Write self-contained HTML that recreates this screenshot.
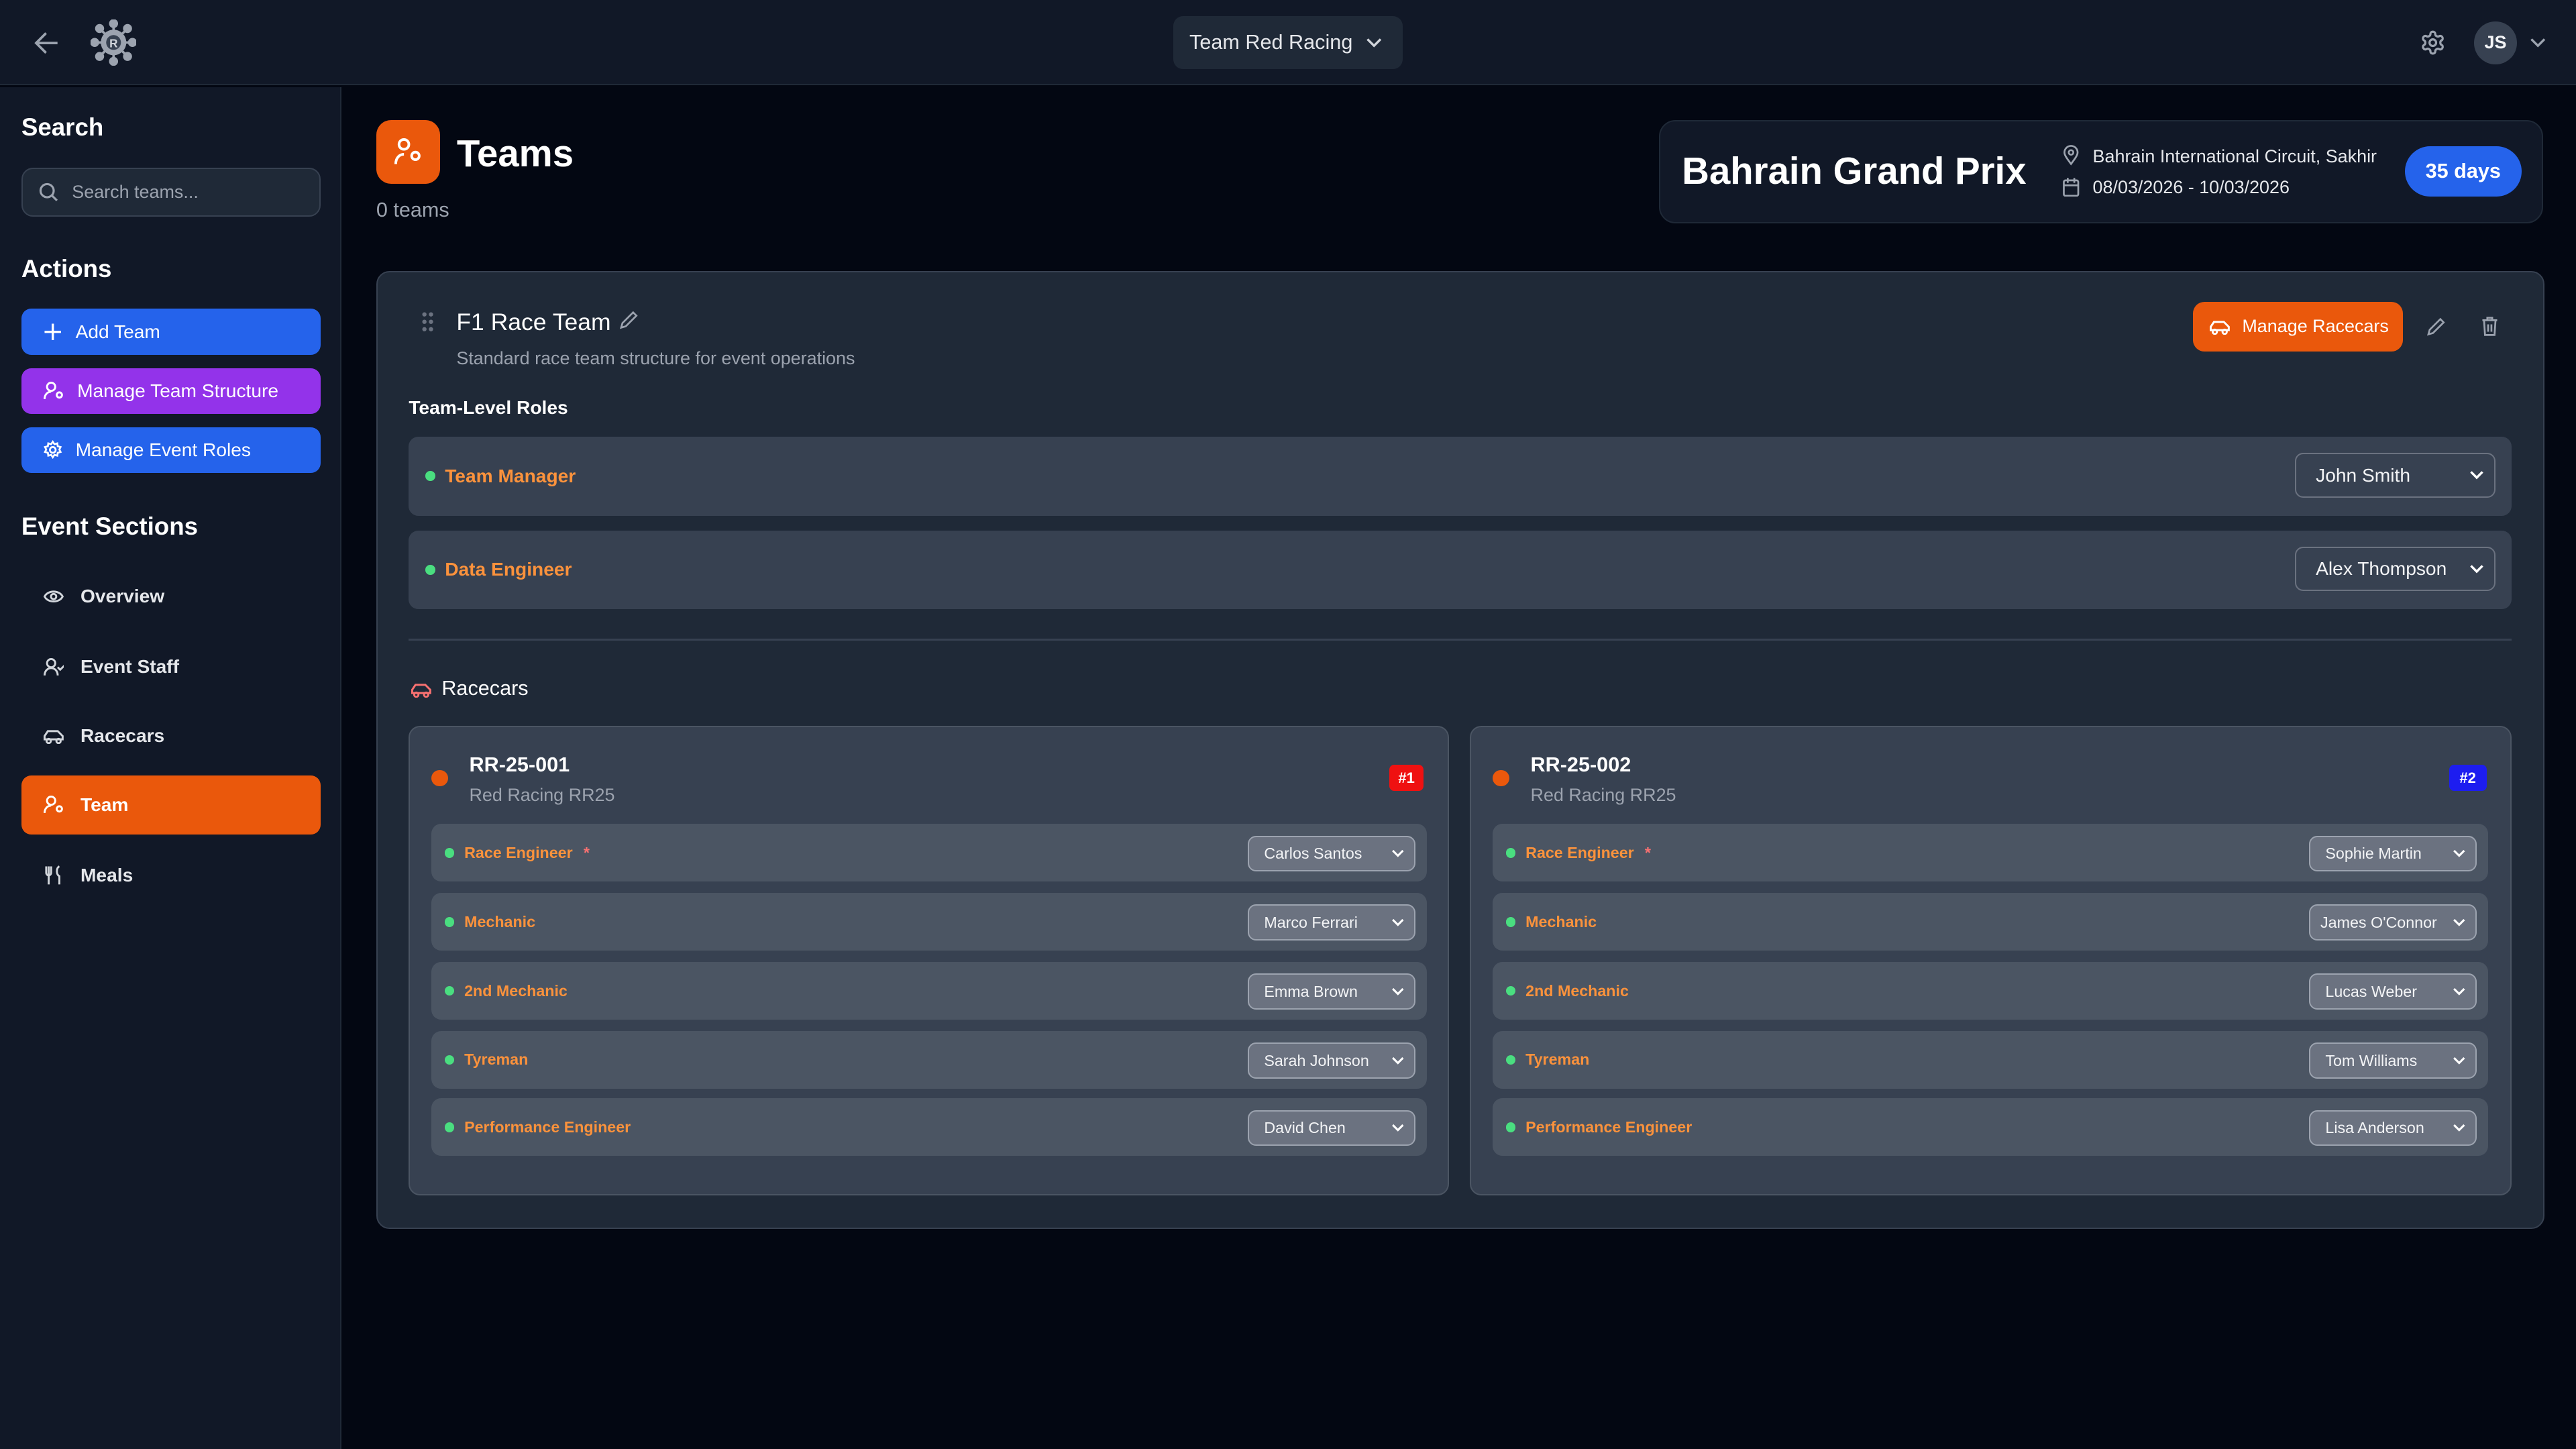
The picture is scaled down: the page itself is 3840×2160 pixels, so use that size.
<!DOCTYPE html>
<html><head><meta charset="utf-8"><style>
*{box-sizing:border-box;margin:0;padding:0}
html,body{width:3840px;height:2160px;overflow:hidden;background:#030712}
#w{zoom:2.44898;width:1568px;height:882px;position:relative;font-family:"Liberation Sans",sans-serif;color:#f3f4f6;background:#030712}
.a{position:absolute}
svg{display:block}
.hdr{left:0;top:0;width:1568px;height:52px;background:#111827;border-bottom:1px solid #1f2937}
.side{left:0;top:53px;width:208px;height:829px;background:#111827;border-right:1px solid #1f2937}
.h{font-size:15px;font-weight:bold;color:#fff}
.btn{left:13px;width:182px;height:28px;border-radius:6px;color:#fff;font-size:11.5px;display:flex;align-items:center;padding-left:13px;gap:8px}
.nav{left:13px;width:182px;height:36px;border-radius:6px;font-size:11.5px;color:#e5e7eb;display:flex;align-items:center;padding-left:13px;gap:10px;font-weight:bold}
.row{background:#374151;border-radius:6px;display:flex;align-items:center;padding-left:10px}
.dot{width:6px;height:6px;border-radius:50%;background:#4ade80;margin-right:6px}
.lbl{color:#fb923c;font-weight:bold;font-size:11.5px}
.sel{position:absolute;border-radius:5px;display:flex;align-items:center;padding-left:12px;font-size:11.5px;color:#f3f4f6;white-space:nowrap;overflow:hidden}
.crow{position:absolute;left:13px;width:606px;height:35px;background:#4b5563;border-radius:6px;display:flex;align-items:center;padding-left:8px}
.crow .lbl{font-size:9.5px}
.crow .sel{right:7px;top:7px;width:102px;height:22px;background:#6b7280;border:1px solid #9ca3af;font-size:9.5px;padding-left:9px}
.chev{position:absolute;right:6px;top:50%;margin-top:-3px}
</style></head><body><div id="w">
<div class="a hdr">
 <svg class="a" style="left:20px;top:19px" width="16" height="14" viewBox="0 0 16 14"><path d="M8 1L2 7l6 6M2 7h13" stroke="#9ca3af" stroke-width="1.5" fill="none"/></svg>
 <svg class="a" style="left:55px;top:12px" width="28" height="28" viewBox="0 0 28 28" fill="#9ca3af" stroke="#9ca3af" stroke-width="1.5"><g><line x1="14" y1="2" x2="14" y2="26"/><line x1="2" y1="14" x2="26" y2="14"/><line x1="5" y1="5" x2="23" y2="23"/><line x1="23" y1="5" x2="5" y2="23"/></g><circle cx="14" cy="2.5" r="2"/><circle cx="14" cy="25.5" r="2"/><circle cx="2.5" cy="14" r="2"/><circle cx="25.5" cy="14" r="2"/><circle cx="5.5" cy="5.5" r="2"/><circle cx="22.5" cy="22.5" r="2"/><circle cx="22.5" cy="5.5" r="2"/><circle cx="5.5" cy="22.5" r="2"/><circle cx="14" cy="14" r="7" fill="#9ca3af"/><circle cx="14" cy="14" r="4.5" fill="#374151" stroke="none"/><text x="14" y="17" font-size="7" font-weight="bold" text-anchor="middle" fill="#d1d5db" stroke="none" font-family="Liberation Sans">R</text></svg>
 <div class="a" style="left:714px;top:10px;width:140px;height:32px;background:#1f2937;border-radius:6px;display:flex;align-items:center;padding-left:10px;font-size:12.5px;color:#e5e7eb">Team Red Racing<svg style="margin-left:8px" width="10" height="6" viewBox="0 0 10 6"><path d="M1 1l4 4 4-4" stroke="#d1d5db" stroke-width="1.4" fill="none"/></svg></div>
 <svg class="a" style="left:1473px;top:18px" width="16" height="16" viewBox="0 0 24 24" fill="none" stroke="#9ca3af" stroke-width="2"><path d="M12.22 2h-.44a2 2 0 0 0-2 2v.18a2 2 0 0 1-1 1.73l-.43.25a2 2 0 0 1-2 0l-.15-.08a2 2 0 0 0-2.73.73l-.22.38a2 2 0 0 0 .73 2.73l.15.1a2 2 0 0 1 1 1.72v.51a2 2 0 0 1-1 1.74l-.15.09a2 2 0 0 0-.73 2.730l.22.38a2 2 0 0 0 2.73.73l.15-.08a2 2 0 0 1 2 0l.43.25a2 2 0 0 1 1 1.73V20a2 2 0 0 0 2 2h.44a2 2 0 0 0 2-2v-.18a2 2 0 0 1 1-1.73l.43-.25a2 2 0 0 1 2 0l.15.08a2 2 0 0 0 2.73-.73l.22-.39a2 2 0 0 0-.73-2.73l-.15-.08a2 2 0 0 1-1-1.74v-.5a2 2 0 0 1 1-1.74l.15-.09a2 2 0 0 0 .73-2.73l-.22-.38a2 2 0 0 0-2.73-.73l-.15.08a2 2 0 0 1-2 0l-.43-.25a2 2 0 0 1-1-1.73V4a2 2 0 0 0-2-2z"/><circle cx="12" cy="12" r="3"/></svg>
 <div class="a" style="left:1506px;top:13px;width:26px;height:26px;border-radius:50%;background:#374151;font-size:11px;font-weight:bold;display:flex;align-items:center;justify-content:center">JS</div>
 <svg class="a" style="left:1540px;top:23px" width="10" height="6" viewBox="0 0 10 6"><path d="M1 1l4 4 4-4" stroke="#9ca3af" stroke-width="1.4" fill="none"/></svg>
</div>
<div class="a side">
 <div class="a h" style="left:13px;top:16px">Search</div>
 <div class="a" style="left:13px;top:49px;width:182px;height:30px;border:1px solid #374151;background:#1f2937;border-radius:7px;display:flex;align-items:center;padding-left:10px;gap:8px;font-size:11px;color:#9ca3af"><svg width="12" height="12" viewBox="0 0 12 12"><circle cx="5" cy="5" r="4" stroke="#9ca3af" stroke-width="1.3" fill="none"/><path d="M8 8l3 3" stroke="#9ca3af" stroke-width="1.3"/></svg>Search teams...</div>
 <div class="a h" style="left:13px;top:102px">Actions</div>
 <div class="a btn" style="top:135px;background:#2563eb"><svg width="12" height="12" viewBox="0 0 12 12"><path d="M6 1v10M1 6h10" stroke="#fff" stroke-width="1.4"/></svg>Add Team</div>
 <div class="a btn" style="top:171px;background:#9333ea"><svg width="13" height="12" viewBox="0 0 13 12" fill="none" stroke="#fff" stroke-width="1.2"><circle cx="5" cy="3.5" r="2.5"/><path d="M1 11c0-3 2-4.5 4-4.5"/><circle cx="10" cy="8.5" r="1.6"/></svg>Manage Team Structure</div>
 <div class="a btn" style="top:207px;background:#2563eb"><svg width="12" height="12" viewBox="0 0 24 24" fill="none" stroke="#fff" stroke-width="2.2"><circle cx="12" cy="12" r="3.5"/><path d="M12 2l2 3 3.5-1 .5 3.5 3.5 1-1.5 3 1.5 3-3.5 1-.5 3.5-3.5-1-2 3-2-3-3.5 1-.5-3.5-3.5-1 1.5-3-1.5-3 3.5-1 .5-3.5 3.5 1z"/></svg>Manage Event Roles</div>
 <div class="a h" style="left:13px;top:259px">Event Sections</div>
 <div class="a nav" style="top:292px"><svg width="13" height="10" viewBox="0 0 13 10" fill="none" stroke="#d1d5db" stroke-width="1.2"><path d="M1 5c2-4 9-4 11 0-2 4-9 4-11 0z"/><circle cx="6.5" cy="5" r="1.6"/></svg>Overview</div>
 <div class="a nav" style="top:335px"><svg width="13" height="12" viewBox="0 0 13 12" fill="none" stroke="#d1d5db" stroke-width="1.2"><circle cx="5" cy="3.5" r="2.5"/><path d="M1 11c0-3 2-4.5 4-4.5s4 1.5 4 4.5M9 6l1.5 1.5L13 5"/></svg>Event Staff</div>
 <div class="a nav" style="top:377px"><svg width="13" height="10" viewBox="0 0 13 10" fill="none" stroke="#d1d5db" stroke-width="1.2"><path d="M1 7V5l2-3h6l3 3v2z"/><circle cx="3.5" cy="8" r="1.3"/><circle cx="9.5" cy="8" r="1.3"/></svg>Racecars</div>
 <div class="a nav" style="top:419px;background:#ea580c;color:#fff"><svg width="13" height="12" viewBox="0 0 13 12" fill="none" stroke="#fff" stroke-width="1.2"><circle cx="5" cy="3.5" r="2.5"/><path d="M1 11c0-3 2-4.5 4-4.5"/><circle cx="10" cy="8.5" r="1.6"/></svg>Team</div>
 <div class="a nav" style="top:462px"><svg width="13" height="13" viewBox="0 0 13 13" fill="none" stroke="#d1d5db" stroke-width="1.2"><path d="M2 1v4a1.5 1.5 0 0 0 3 0V1M3.5 1v11M10 1c-2 1-2 5 0 6v5"/></svg>Meals</div>
</div>
<div class="a" style="left:229px;top:73px;width:39px;height:39px;background:#ea580c;border-radius:9px"><svg style="margin:10px" width="19" height="19" viewBox="0 0 19 19" fill="none" stroke="#fff" stroke-width="1.6"><circle cx="7" cy="5" r="3"/><path d="M2 17c0-4 2.5-6 5-6"/><circle cx="14" cy="12" r="2.3"/></svg></div>
<div class="a" style="left:278px;top:80px;font-size:23px;font-weight:bold;color:#fff">Teams</div>
<div class="a" style="left:229px;top:121px;font-size:12.5px;color:#9ca3af">0 teams</div>
<div class="a" style="left:1010px;top:73px;width:538px;height:63px;background:#111827;border:1px solid #1f2937;border-radius:10px">
 <div class="a" style="left:13px;top:17px;font-size:23px;font-weight:bold;color:#fff;white-space:nowrap">Bahrain Grand Prix</div>
 <svg class="a" style="left:245px;top:14px" width="10" height="13" viewBox="0 0 10 13" fill="none" stroke="#9ca3af" stroke-width="1.1"><path d="M5 12C2 8 1 6.5 1 5a4 4 0 0 1 8 0c0 1.5-1 3-4 7z"/><circle cx="5" cy="5" r="1.4"/></svg>
 <div class="a" style="left:263px;top:15px;font-size:11px;color:#e5e7eb;white-space:nowrap">Bahrain International Circuit, Sakhir</div>
 <svg class="a" style="left:245px;top:34px" width="10" height="12" viewBox="0 0 10 12" fill="none" stroke="#9ca3af" stroke-width="1.1"><rect x="0.6" y="2" width="8.8" height="9.4" rx="1"/><path d="M0.6 5h8.8M3 0.5v3M7 0.5v3"/></svg>
 <div class="a" style="left:263px;top:34px;font-size:11px;color:#e5e7eb">08/03/2026 - 10/03/2026</div>
 <div class="a" style="left:453px;top:15px;width:71px;height:31px;border-radius:16px;background:#2563eb;color:#fff;font-size:12.5px;font-weight:bold;display:flex;align-items:center;justify-content:center">35 days</div>
</div>
<div class="a" style="left:229px;top:165px;width:1320px;height:583px;background:#1f2937;border:1px solid #374151;border-radius:8px">
 <svg class="a" style="left:27px;top:24px" width="7" height="12" viewBox="0 0 7 12" fill="#6b7280"><circle cx="1.5" cy="1.5" r="1.3"/><circle cx="5.5" cy="1.5" r="1.3"/><circle cx="1.5" cy="6" r="1.3"/><circle cx="5.5" cy="6" r="1.3"/><circle cx="1.5" cy="10.5" r="1.3"/><circle cx="5.5" cy="10.5" r="1.3"/></svg>
 <div class="a" style="left:48px;top:22px;font-size:14.5px;color:#fff">F1 Race Team</div>
 <svg class="a" style="left:147px;top:23px" width="12" height="12" viewBox="0 0 12 12" fill="none" stroke="#9ca3af" stroke-width="1.1"><path d="M8.5 1.5l2 2L4 10l-2.8.8L2 8z"/></svg>
 <div class="a" style="left:48px;top:46px;font-size:11px;color:#9ca3af">Standard race team structure for event operations</div>
 <div class="a" style="left:1105px;top:18px;width:128px;height:30px;background:#ea580c;border-radius:7px;color:#fff;font-size:11px;display:flex;align-items:center;padding-left:10px;gap:7px"><svg width="13" height="10" viewBox="0 0 13 10" fill="none" stroke="#fff" stroke-width="1.2"><path d="M1 7V5l2-3h6l3 3v2z"/><circle cx="3.5" cy="8" r="1.3"/><circle cx="9.5" cy="8" r="1.3"/></svg>Manage Racecars</div>
 <svg class="a" style="left:1247px;top:27px" width="12" height="12" viewBox="0 0 12 12" fill="none" stroke="#9ca3af" stroke-width="1.1"><path d="M8.5 1.5l2 2L4 10l-2.8.8L2 8z"/></svg>
 <svg class="a" style="left:1280px;top:26px" width="11" height="13" viewBox="0 0 11 13" fill="none" stroke="#9ca3af" stroke-width="1.1"><path d="M1 3h9M4 3V1.5h3V3M2 3l.6 9h5.8L9 3M4.5 5.5v4.5M6.5 5.5v4.5"/></svg>
 <div class="a" style="left:19px;top:76px;font-size:11.5px;font-weight:bold;color:#fff">Team-Level Roles</div>
 <div class="a row" style="left:19px;top:100px;width:1280px;height:48px"><div class="dot"></div><span class="lbl">Team Manager</span>
  <div class="sel" style="right:10px;top:10px;width:122px;height:27px;background:#374151;border:1px solid #6b7280">John Smith<svg class="chev" width="9" height="6" viewBox="0 0 9 6"><path d="M1 1l3.5 3.5L8 1" stroke="#fff" stroke-width="1.4" fill="none"/></svg></div></div>
 <div class="a row" style="left:19px;top:157px;width:1280px;height:48px"><div class="dot"></div><span class="lbl">Data Engineer</span>
  <div class="sel" style="right:10px;top:10px;width:122px;height:27px;background:#374151;border:1px solid #6b7280">Alex Thompson<svg class="chev" width="9" height="6" viewBox="0 0 9 6"><path d="M1 1l3.5 3.5L8 1" stroke="#fff" stroke-width="1.4" fill="none"/></svg></div></div>
 <div class="a" style="left:19px;top:223px;width:1280px;height:1px;background:#374151"></div>
 <svg class="a" style="left:20px;top:249px" width="13" height="10" viewBox="0 0 13 10" fill="none" stroke="#f87171" stroke-width="1.2"><path d="M1 7V5l2-3h6l3 3v2z"/><circle cx="3.5" cy="8" r="1.3"/><circle cx="9.5" cy="8" r="1.3"/></svg>
 <div class="a" style="left:39px;top:246px;font-size:12.5px;color:#fff">Racecars</div>

 <div class="a" style="left:19px;top:276px;width:633px;height:286px;background:#374151;border:1px solid #4b5563;border-radius:7px">
  <div class="a" style="left:13px;top:26px;width:10px;height:10px;border-radius:50%;background:#ea580c"></div>
  <div class="a" style="left:36px;top:16px;font-size:12.5px;font-weight:bold;color:#fff">RR-25-001</div>
  <div class="a" style="left:36px;top:35px;font-size:11px;color:#9ca3af">Red Racing RR25</div>
  <div class="a" style="left:596px;top:23px;width:21px;height:16px;background:#ef1111;border-radius:3px;font-size:9px;font-weight:bold;color:#fff;display:flex;align-items:center;justify-content:center">#1</div>
  <div class="crow" style="top:59px"><div class="dot"></div><span class="lbl">Race Engineer <span style="color:#f87171;margin-left:4px">*</span></span><div class="sel">Carlos Santos<svg class="chev" width="8" height="6" viewBox="0 0 9 6"><path d="M1 1l3.5 3.5L8 1" stroke="#fff" stroke-width="1.4" fill="none"/></svg></div></div>
  <div class="crow" style="top:101px"><div class="dot"></div><span class="lbl">Mechanic</span><div class="sel">Marco Ferrari<svg class="chev" width="8" height="6" viewBox="0 0 9 6"><path d="M1 1l3.5 3.5L8 1" stroke="#fff" stroke-width="1.4" fill="none"/></svg></div></div>
  <div class="crow" style="top:143px"><div class="dot"></div><span class="lbl">2nd Mechanic</span><div class="sel">Emma Brown<svg class="chev" width="8" height="6" viewBox="0 0 9 6"><path d="M1 1l3.5 3.5L8 1" stroke="#fff" stroke-width="1.4" fill="none"/></svg></div></div>
  <div class="crow" style="top:185px"><div class="dot"></div><span class="lbl">Tyreman</span><div class="sel">Sarah Johnson<svg class="chev" width="8" height="6" viewBox="0 0 9 6"><path d="M1 1l3.5 3.5L8 1" stroke="#fff" stroke-width="1.4" fill="none"/></svg></div></div>
  <div class="crow" style="top:226px"><div class="dot"></div><span class="lbl">Performance Engineer</span><div class="sel">David Chen<svg class="chev" width="8" height="6" viewBox="0 0 9 6"><path d="M1 1l3.5 3.5L8 1" stroke="#fff" stroke-width="1.4" fill="none"/></svg></div></div>
 </div>
 <div class="a" style="left:665px;top:276px;width:634px;height:286px;background:#374151;border:1px solid #4b5563;border-radius:7px">
  <div class="a" style="left:13px;top:26px;width:10px;height:10px;border-radius:50%;background:#ea580c"></div>
  <div class="a" style="left:36px;top:16px;font-size:12.5px;font-weight:bold;color:#fff">RR-25-002</div>
  <div class="a" style="left:36px;top:35px;font-size:11px;color:#9ca3af">Red Racing RR25</div>
  <div class="a" style="left:595px;top:23px;width:23px;height:16px;background:#1d1df0;border-radius:3px;font-size:9px;font-weight:bold;color:#fff;display:flex;align-items:center;justify-content:center">#2</div>
  <div class="crow" style="top:59px"><div class="dot"></div><span class="lbl">Race Engineer <span style="color:#f87171;margin-left:4px">*</span></span><div class="sel">Sophie Martin<svg class="chev" width="8" height="6" viewBox="0 0 9 6"><path d="M1 1l3.5 3.5L8 1" stroke="#fff" stroke-width="1.4" fill="none"/></svg></div></div>
  <div class="crow" style="top:101px"><div class="dot"></div><span class="lbl">Mechanic</span><div class="sel" style="padding-left:6px">James O'Connor<svg class="chev" width="8" height="6" viewBox="0 0 9 6"><path d="M1 1l3.5 3.5L8 1" stroke="#fff" stroke-width="1.4" fill="none"/></svg></div></div>
  <div class="crow" style="top:143px"><div class="dot"></div><span class="lbl">2nd Mechanic</span><div class="sel">Lucas Weber<svg class="chev" width="8" height="6" viewBox="0 0 9 6"><path d="M1 1l3.5 3.5L8 1" stroke="#fff" stroke-width="1.4" fill="none"/></svg></div></div>
  <div class="crow" style="top:185px"><div class="dot"></div><span class="lbl">Tyreman</span><div class="sel">Tom Williams<svg class="chev" width="8" height="6" viewBox="0 0 9 6"><path d="M1 1l3.5 3.5L8 1" stroke="#fff" stroke-width="1.4" fill="none"/></svg></div></div>
  <div class="crow" style="top:226px"><div class="dot"></div><span class="lbl">Performance Engineer</span><div class="sel">Lisa Anderson<svg class="chev" width="8" height="6" viewBox="0 0 9 6"><path d="M1 1l3.5 3.5L8 1" stroke="#fff" stroke-width="1.4" fill="none"/></svg></div></div>
 </div>
</div>
</div></body></html>
